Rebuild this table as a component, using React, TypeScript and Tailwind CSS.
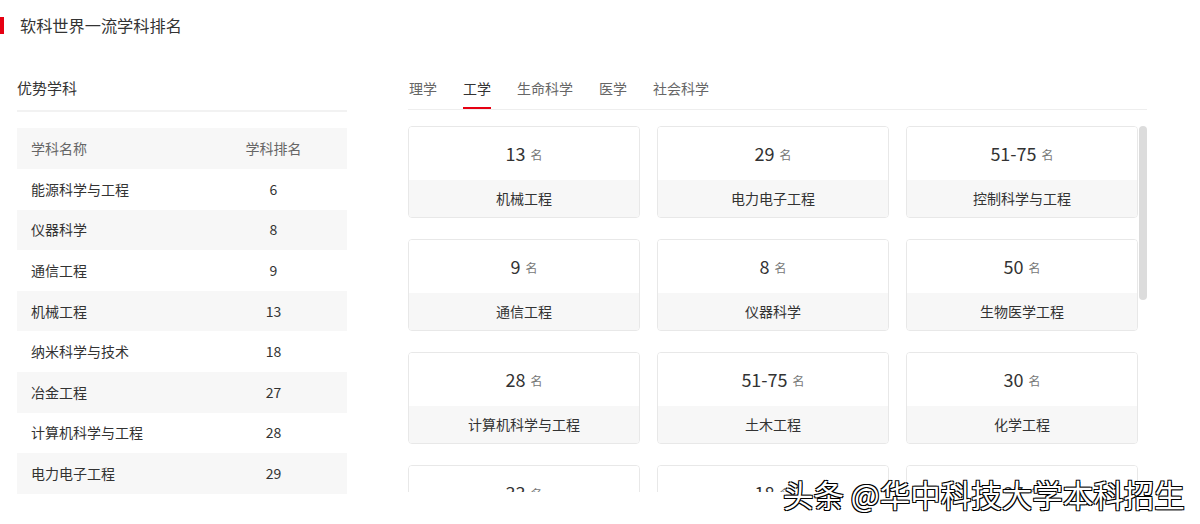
const font = "font-['Noto_Sans_CJK_SC','Noto_Sans',sans-serif]";

const tableRows = [
  { name: "能源科学与工程", rank: "6" },
  { name: "仪器科学", rank: "8" },
  { name: "通信工程", rank: "9" },
  { name: "机械工程", rank: "13" },
  { name: "纳米科学与技术", rank: "18" },
  { name: "冶金工程", rank: "27" },
  { name: "计算机科学与工程", rank: "28" },
  { name: "电力电子工程", rank: "29" },
];

const tabs = ["理学", "工学", "生命科学", "医学", "社会科学"];

const cards = [
  { rank: "13", name: "机械工程" },
  { rank: "29", name: "电力电子工程" },
  { rank: "51-75", name: "控制科学与工程" },
  { rank: "9", name: "通信工程" },
  { rank: "8", name: "仪器科学" },
  { rank: "50", name: "生物医学工程" },
  { rank: "28", name: "计算机科学与工程" },
  { rank: "51-75", name: "土木工程" },
  { rank: "30", name: "化学工程" },
  { rank: "33", name: "材料科学与工程" },
  { rank: "18", name: "纳米科学与技术" },
  { rank: "27", name: "冶金工程" },
];

function RankCard({ rank, name }: { rank: string; name: string }) {
  return (
    <div className="flex flex-col h-[92px] border border-[#e8e8e8] rounded-[4px] overflow-hidden">
      <div className="h-[53px] shrink-0 flex items-center justify-center bg-white">
        <span className="text-[18px] text-[#333]">{rank}</span>
        <span className="text-[12px] text-[#777] ml-[5px] mt-[2px]">名</span>
      </div>
      <div className="h-[37px] shrink-0 flex items-center justify-center bg-[#f7f7f7] text-[14px] text-[#333]">
        {name}
      </div>
    </div>
  );
}

export default function App() {
  return (
    <div className={`relative w-[1200px] h-[524px] bg-white overflow-hidden ${font}`}>
      <div className="flex items-center pt-[17px] h-[34px]">
        <div className="w-[4px] h-[17px] bg-[#e60012]" />
        <p className="ml-[16px] text-[16.2px] text-[#333] leading-[20px] -mt-[1px]">软科世界一流学科排名</p>
      </div>

      <div className="flex flex-row mt-[40px]">
        <div className="ml-[17px] w-[330px] flex flex-col">
          <div className="pb-[8px] border-b-2 border-[#f2f2f2]">
            <p className="text-[15px] leading-[28px] text-[#333]">优势学科</p>
          </div>
          <div className="mt-[16px] flex flex-col">
            <div className="flex h-[41px] items-center bg-[#f7f7f7] text-[14px] text-[#666]">
              <span className="w-[183px] pl-[14px]">学科名称</span>
              <span className="flex-1 text-center">学科排名</span>
            </div>
            {tableRows.map((r, i) => (
              <div
                key={r.name}
                className={`flex h-[40.6px] items-center text-[14px] text-[#333] ${i % 2 === 1 ? "bg-[#f7f7f7]" : "bg-white"}`}
              >
                <span className="w-[183px] pl-[14px]">{r.name}</span>
                <span className="flex-1 text-center">{r.rank}</span>
              </div>
            ))}
          </div>
        </div>

        <div className="ml-[61px] w-[739px] flex flex-col">
          <div className="flex flex-row gap-[26px] h-[36px] border-b border-[#eee] pl-px">
            {tabs.map((t) => (
              <div
                key={t}
                className={`h-full text-[14px] leading-[28px] ${t === "工学" ? "border-b-2 border-[#e60012] text-[#333]" : "text-[#666]"}`}
              >
                {t}
              </div>
            ))}
          </div>
          <div className="mt-[16px] flex flex-row items-start h-[366px] overflow-hidden">
            <div className="w-[730px] shrink-0 grid grid-cols-3 auto-rows-[92px] gap-x-[17px] gap-y-[21px]">
              {cards.map((c) => (
                <RankCard key={c.name + c.rank} rank={c.rank} name={c.name} />
              ))}
            </div>
            <div className="ml-px w-[8px] h-[174px] shrink-0 rounded-full bg-[#dcdcdc]" />
          </div>
        </div>
      </div>

      <div className="absolute left-[783px] top-[475px] whitespace-nowrap text-[30.5px] leading-[38px] text-white [text-shadow:1px_1px_0_#000,-1px_-1px_0_#000,1px_-1px_0_#000,-1px_1px_0_#000]">
        头条 @华中科技大学本科招生
      </div>
    </div>
  );
}
